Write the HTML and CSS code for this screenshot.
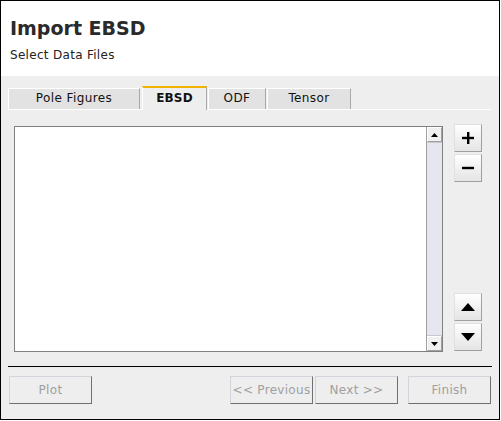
FILE: index.html
```html
<!DOCTYPE html>
<html>
<head>
<meta charset="utf-8">
<link rel="stylesheet" href="styles.css">
</head>
<body>
<div class="window">
  <div class="header">
    <div class="title">Import EBSD</div>
    <div class="subtitle">Select Data Files</div>
  </div>
  <div class="body">
    <div class="tabs">
      <div class="tab t-pole">Pole Figures</div>
      <div class="tab tab-sel t-ebsd">EBSD</div>
      <div class="tab t-odf">ODF</div>
      <div class="tab t-tensor">Tensor</div>
    </div>
    <div class="pane">
      <div class="list">
        <div class="list-area"></div>
        <div class="scrollbar">
          <div class="sb-btn"><svg width="7" height="4" viewBox="0 0 7 4"><path d="M3.5 0 L7 4 L0 4 Z" fill="#000"/></svg></div>
          <div class="sb-track"></div>
          <div class="sb-btn"><svg width="7" height="4" viewBox="0 0 7 4"><path d="M0 0 L7 0 L3.5 4 Z" fill="#000"/></svg></div>
        </div>
      </div>
      <div class="side">
        <div class="side-group">
          <div class="sq-btn"><svg width="14" height="14" viewBox="0 0 14 14"><rect x="6" y="1" width="2.4" height="12" fill="#000"/><rect x="1" y="5.8" width="12" height="2.4" fill="#000"/></svg></div>
          <div class="sq-btn"><svg width="14" height="14" viewBox="0 0 14 14"><rect x="1" y="5.8" width="12" height="2.4" fill="#000"/></svg></div>
        </div>
        <div class="side-group">
          <div class="sq-btn"><svg width="14" height="8" viewBox="0 0 14 8"><path d="M7 0 L14 8 L0 8 Z" fill="#000"/></svg></div>
          <div class="sq-btn"><svg width="14" height="8" viewBox="0 0 14 8"><path d="M0 0 L14 0 L7 8 Z" fill="#000"/></svg></div>
        </div>
      </div>
    </div>
    <div class="separator"></div>
    <div class="footer">
      <div class="btn b-plot">Plot</div>
      <div class="nav">
        <div class="btn b-prev">&lt;&lt; Previous</div>
        <div class="btn b-next">Next &gt;&gt;</div>
      </div>
      <div class="btn b-finish">Finish</div>
    </div>
  </div>
</div>
</body>
</html>
```

FILE: styles.css
```css
html, body {
  margin: 0;
  padding: 0;
  background: #ffffff;
}
body {
  font-family: "DejaVu Sans", Verdana, sans-serif;
  color: #000;
}
.window {
  width: 500px;
  height: 420px;
  box-sizing: border-box;
  border: 1px solid #000;
  display: flex;
  flex-direction: column;
  background: #eeeeee;
}
.header {
  height: 75px;
  background: #ffffff;
  padding: 16px 0 0 9px;
  box-sizing: border-box;
}
.title {
  font-size: 19px;
  font-weight: bold;
  line-height: 22px;
  color: #2a2a2a;
}
.subtitle {
  font-size: 12px;
  line-height: 14px;
  margin-top: 9px;
  color: #222;
  letter-spacing: 0.3px;
}
.body {
  flex: 1;
  display: flex;
  flex-direction: column;
}
.tabs {
  display: flex;
  align-items: flex-end;
  margin: 10px 8px 0 7px;
  height: 23px;
  border-bottom: 1px solid #ffffff;
}
.tab {
  box-sizing: border-box;
  height: 21px;
  background: #e2e2e2;
  border-top: 1px solid #ffffff;
  border-left: 1px solid #ffffff;
  border-right: 1px solid #a8a8a8;
  font-size: 12px;
  line-height: 19px;
  text-align: center;
  color: #111;
  letter-spacing: 0.4px;
}
.t-pole { width: 132px; }
.t-ebsd { width: 65px; margin-left: 2px; }
.t-odf { width: 58px; margin-left: 1px; }
.t-tensor { width: 84px; margin-left: 1px; }
.tab-sel {
  height: 24px;
  background: #eeeeee;
  border-top: 2px solid #f0b400;
  font-weight: bold;
  line-height: 20px;
  margin-bottom: -1px;
  letter-spacing: 0.2px;
}
.pane {
  display: flex;
  margin: 16px 0 0 13px;
}
.list {
  width: 429px;
  height: 226px;
  box-sizing: border-box;
  border: 1px solid #808080;
  background: #ffffff;
  display: flex;
}
.list-area {
  flex: 1;
}
.scrollbar {
  width: 15px;
  display: flex;
  flex-direction: column;
  background: #e6e6ee;
  border-left: 1px solid #a0a0a0;
}
.sb-btn {
  height: 15px;
  box-sizing: border-box;
  background: #f0f0f0;
  border: 1px solid #ffffff;
  border-right-color: #a0a0a0;
  border-bottom-color: #a0a0a0;
  display: flex;
  align-items: center;
  justify-content: center;
}
.sb-track {
  flex: 1;
  border-top: 1px solid #c8c8d0;
  border-bottom: 1px solid #c8c8d0;
}
.side {
  margin-left: 11px;
  margin-top: -2px;
  height: 227px;
  display: flex;
  flex-direction: column;
  justify-content: space-between;
}
.side-group {
  display: flex;
  flex-direction: column;
  gap: 2px;
}
.sq-btn {
  width: 28px;
  height: 28px;
  box-sizing: border-box;
  background: linear-gradient(#ffffff, #e4e4e4);
  border: 1px solid #e0e0e0;
  border-right-color: #a0a0a0;
  border-bottom-color: #a0a0a0;
  display: flex;
  align-items: center;
  justify-content: center;
}
.separator {
  height: 1px;
  background: #000;
  margin: 14px 7px 0 7px;
}
.footer {
  display: flex;
  margin: 9px 0 0 8px;
}
.btn {
  box-sizing: border-box;
  width: 83px;
  height: 28px;
  border: 1px solid #d4d4dc;
  border-right-color: #707070;
  border-bottom-color: #707070;
  font-size: 12px;
  line-height: 26px;
  text-align: center;
  color: #a0a0a0;
  background: #eeeeee;
  letter-spacing: 0.3px;
  white-space: nowrap;
}
.nav {
  display: flex;
  gap: 2px;
  margin-left: 138px;
}
.b-finish {
  margin-left: 10px;
}
```
